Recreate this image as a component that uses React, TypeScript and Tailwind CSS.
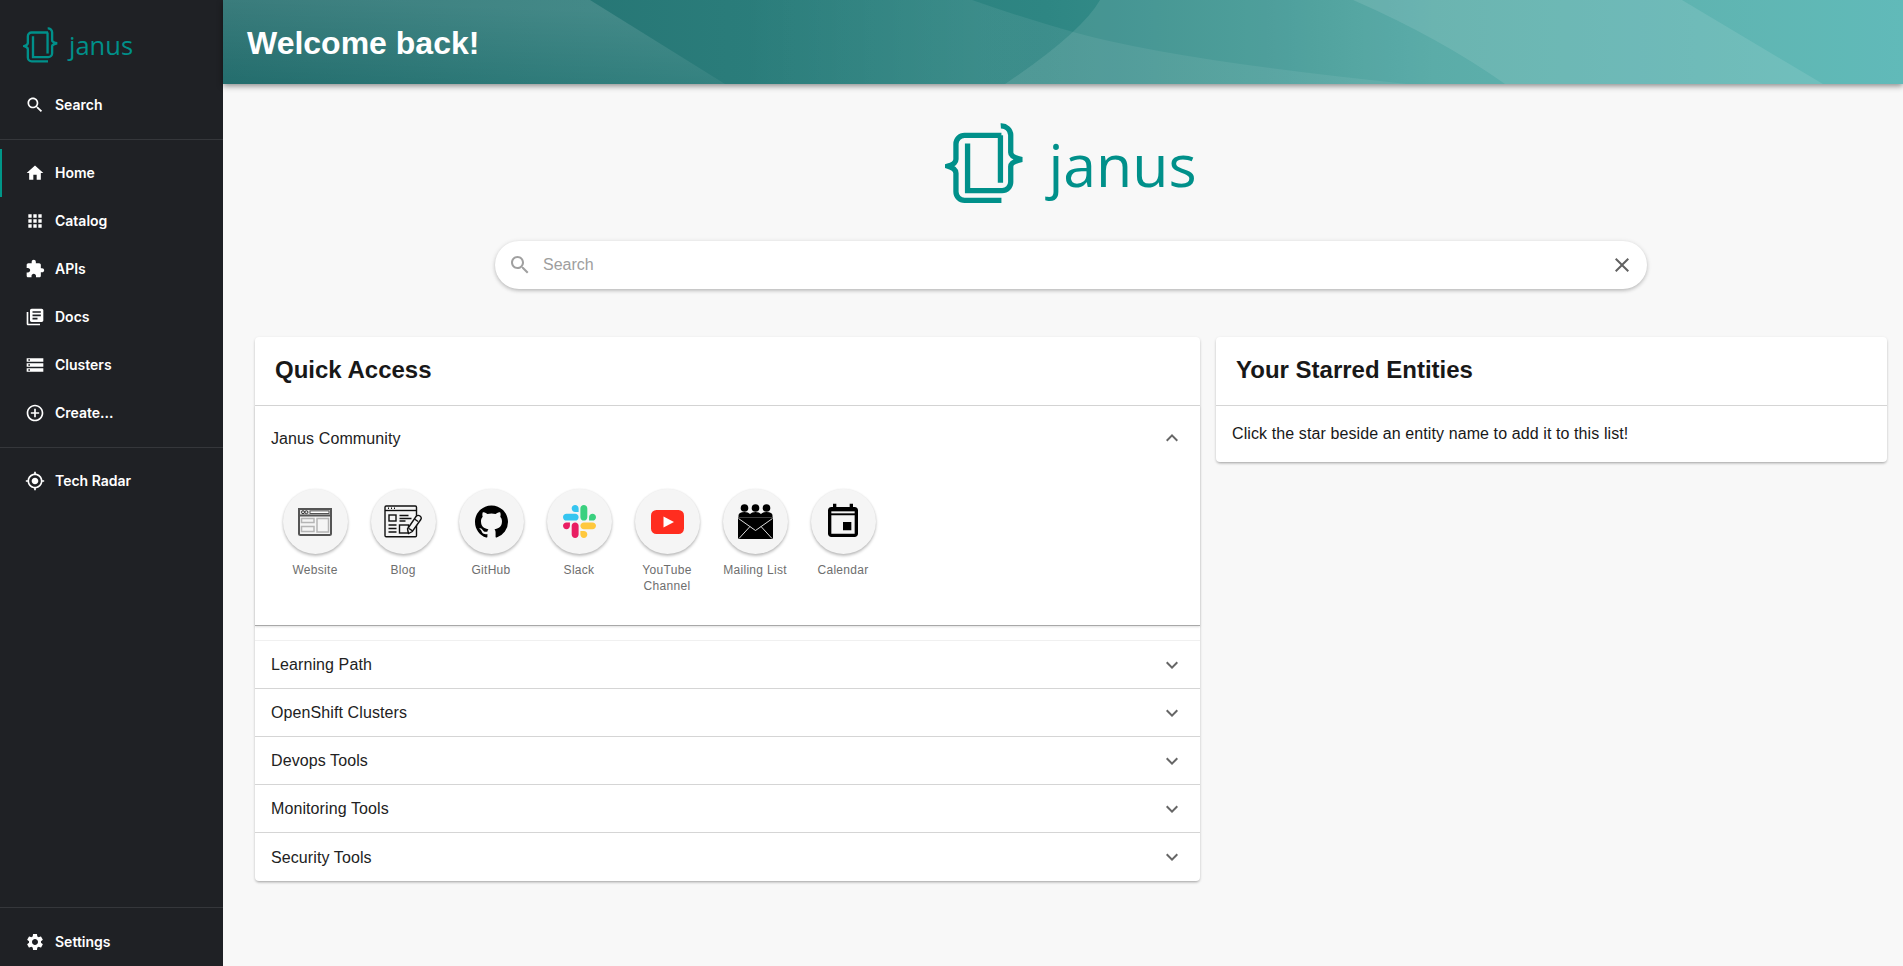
const ICONS = {
  search: 'M15.5 14h-.79l-.28-.27C15.41 12.59 16 11.11 16 9.5 16 5.91 13.09 3 9.5 3S3 5.91 3 9.5 5.91 16 9.5 16c1.61 0 3.09-.59 4.23-1.57l.27.28v.79l5 4.99L20.49 19l-4.99-5zm-6 0C7.01 14 5 11.99 5 9.5S7.01 5 9.5 5 14 7.01 14 9.5 11.99 14 9.5 14z',
  home: 'M10 20v-6h4v6h5v-8h3L12 3 2 12h3v8z',
  apps: 'M4 8h4V4H4v4zm6 12h4v-4h-4v4zm-6 0h4v-4H4v4zm0-6h4v-4H4v4zm6 0h4v-4h-4v4zm6-10v4h4V4h-4zm-6 4h4V4h-4v4zm6 6h4v-4h-4v4zm0 6h4v-4h-4v4z',
  extension: 'M20.5 11H19V7c0-1.1-.9-2-2-2h-4V3.5C13 2.12 11.88 1 10.5 1S8 2.12 8 3.5V5H4c-1.1 0-1.99.9-1.99 2v3.8H3.5c1.49 0 2.7 1.21 2.7 2.7s-1.21 2.7-2.7 2.7H2V20c0 1.1.9 2 2 2h3.8v-1.5c0-1.49 1.21-2.7 2.7-2.7 1.49 0 2.7 1.21 2.7 2.7V22H17c1.1 0 2-.9 2-2v-4h1.5c1.38 0 2.5-1.12 2.5-2.5S21.88 11 20.5 11z',
  docs: 'M4 6H2v14c0 1.1.9 2 2 2h14v-2H4V6zm16-4H8c-1.1 0-2 .9-2 2v12c0 1.1.9 2 2 2h12c1.1 0 2-.9 2-2V4c0-1.1-.9-2-2-2zm-1 9H9V9h10v2zm-4 4H9v-2h6v2zm4-8H9V5h10v2z',
  storage: 'M2 20h20v-4H2v4zm2-3h2v2H4v-2zM2 4v4h20V4H2zm4 3H4V5h2v2zm-4 7h20v-4H2v4zm2-3h2v2H4v-2z',
  add: 'M13 7h-2v4H7v2h4v4h2v-4h4v-2h-4V7zm-1-5C6.48 2 2 6.48 2 12s4.48 10 10 10 10-4.48 10-10S17.52 2 12 2zm0 18c-4.41 0-8-3.59-8-8s3.59-8 8-8 8 3.59 8 8-3.59 8-8 8z',
  radar: 'M12 8c-2.21 0-4 1.79-4 4s1.79 4 4 4 4-1.79 4-4-1.79-4-4-4zm8.94 3c-.46-4.17-3.77-7.48-7.94-7.94V1h-2v2.06C6.83 3.52 3.52 6.83 3.06 11H1v2h2.06c.46 4.17 3.77 7.48 7.94 7.94V23h2v-2.06c4.17-.46 7.48-3.77 7.94-7.94H23v-2h-2.06zM12 19c-3.87 0-7-3.13-7-7s3.13-7 7-7 7 3.13 7 7-3.13 7-7 7z',
  settings: 'M19.14 12.94c.04-.3.06-.61.06-.94 0-.32-.02-.64-.07-.94l2.03-1.58c.18-.14.23-.41.12-.61l-1.92-3.32c-.12-.22-.37-.29-.59-.22l-2.39.96c-.5-.38-1.03-.7-1.62-.94l-.36-2.54c-.04-.24-.24-.41-.48-.41h-3.84c-.24 0-.43.17-.47.41l-.36 2.54c-.59.24-1.13.57-1.62.94l-2.39-.96c-.22-.08-.47 0-.59.22L2.74 8.87c-.12.21-.08.47.12.61l2.03 1.58c-.05.3-.09.63-.09.94s.02.64.07.94l-2.03 1.58c-.18.14-.23.41-.12.61l1.92 3.32c.12.22.37.29.59.22l2.39-.96c.5.38 1.03.7 1.62.94l.36 2.54c.05.24.24.41.48.41h3.84c.24 0 .44-.17.47-.41l.36-2.54c.59-.24 1.13-.56 1.62-.94l2.39.96c.22.08.47 0 .59-.22l1.92-3.32c.12-.22.07-.47-.12-.61l-2.01-1.58zM12 15.6c-1.98 0-3.6-1.62-3.6-3.6s1.62-3.6 3.6-3.6 3.6 1.62 3.6 3.6-1.62 3.6-3.6 3.6z',
  more: 'M16.59 8.59L12 13.17 7.41 8.59 6 10l6 6 6-6z',
  less: 'M12 8l-6 6 1.41 1.41L12 10.83l4.59 4.58L18 14z',
  clear: 'M19 6.41L17.59 5 12 10.59 6.41 5 5 6.41 10.59 12 5 17.59 6.41 19 12 13.41 17.59 19 19 17.59 13.41 12z',
  github: 'M12 .3C5.37.3 0 5.67 0 12.3c0 5.3 3.44 9.8 8.2 11.39.6.11.82-.26.82-.58v-2.03c-3.34.73-4.04-1.61-4.04-1.61-.55-1.39-1.34-1.76-1.34-1.76-1.09-.74.08-.73.08-.73 1.2.09 1.84 1.24 1.84 1.24 1.07 1.83 2.81 1.3 3.5 1 .1-.78.42-1.31.76-1.61-2.67-.3-5.47-1.33-5.47-5.93 0-1.31.47-2.38 1.24-3.22-.14-.3-.54-1.52.1-3.18 0 0 1.01-.32 3.3 1.23a11.5 11.5 0 0 1 6 0c2.28-1.55 3.29-1.23 3.29-1.23.64 1.66.24 2.88.12 3.18a4.65 4.65 0 0 1 1.23 3.22c0 4.61-2.8 5.63-5.48 5.92.42.36.81 1.1.81 2.22v3.29c0 .32.22.7.82.58A12 12 0 0 0 24 12.3C24 5.67 18.63.3 12 .3z',
}

function Mui({ d, className }: { d: string; className: string }) {
  return (
    <svg viewBox="0 0 24 24" fill="currentColor" className={className}>
      <path d={d} />
    </svg>
  )
}

function LogoMark({ className }: { className: string }) {
  return (
    <svg viewBox="78 72 238 240" fill="none" stroke="currentColor" strokeWidth="16" className={className}>
      <path d="M248 107H137a26 26 0 0 0-26 26v46q0 14-24 21q24 7 24 21v56a26 26 0 0 0 26 26h111" />
      <path d="M146 132V274H250a26 26 0 0 0 26-26V201q0-14 34-21q-34-7-34-21V106a28 28 0 0 0-30-27" />
      <path d="M245 107V250" />
    </svg>
  )
}

function WebsiteIcon() {
  return (
    <svg viewBox="0 0 34 28" className="h-[28px] w-[34px]">
      <rect x="1" y="1" width="32" height="26" rx="1.5" fill="#f5f5f5" stroke="#555" strokeWidth="2" />
      <rect x="1" y="1" width="32" height="6.5" fill="#e0e0e0" stroke="#555" strokeWidth="2" />
      <circle cx="5" cy="4.2" r="1.5" fill="none" stroke="#333" />
      <circle cx="8.4" cy="4.2" r="1.5" fill="none" stroke="#333" />
      <rect x="12" y="2.9" width="19" height="2.6" fill="#fff" stroke="#444" strokeWidth="0.9" />
      <rect x="3.5" y="10.5" width="12.5" height="4" fill="#f5f5f5" stroke="#b5b5b5" strokeWidth="1.5" />
      <rect x="3.5" y="18.5" width="12.5" height="5" fill="#f5f5f5" stroke="#b5b5b5" strokeWidth="1.5" />
      <rect x="19" y="10.5" width="11.5" height="13.5" fill="#f5f5f5" stroke="#b5b5b5" strokeWidth="1.5" />
    </svg>
  )
}

function BlogIcon() {
  return (
    <svg viewBox="0 0 38 33" fill="none" stroke="#111" strokeWidth="1.4" className="h-[33px] w-[38px]">
      <rect x="1" y="1" width="31.5" height="30.8" rx="1.2" />
      <path d="M1 5.5H32.5" />
      <path d="M4 3.2h1M7 3.2h1M10 3.2h1" strokeWidth="1.4" />
      <rect x="5" y="10" width="7" height="6" />
      <path d="M15.5 10.5h9M15.5 13.5h12M15.5 16h6M4.5 20h8M4.5 23.5h8M4.5 27h8" />
      <rect x="15.5" y="20" width="9" height="8" />
      <path d="M24.5 28.5l-1-4.5 8.5-12.5q2-2 4-.5t.8 3.5l-8.5 12z" fill="#f5f5f5" />
      <path d="M25 23.5l3.5 2.3M30.5 14l3.5 2.5" />
    </svg>
  )
}

function SlackIcon() {
  return (
    <svg viewBox="0 0 122.8 122.8" className="size-[33px]">
      <path fill="#e91e63" d="M25.8 77.6c0 7.1-5.8 12.9-12.9 12.9S0 84.7 0 77.6s5.8-12.9 12.9-12.9h12.9v12.9zm6.5 0c0-7.1 5.8-12.9 12.9-12.9s12.9 5.8 12.9 12.9v32.3c0 7.1-5.8 12.9-12.9 12.9s-12.9-5.8-12.9-12.9V77.6z" />
      <path fill="#36c5f0" d="M45.2 25.8c-7.1 0-12.9-5.8-12.9-12.9S38.1 0 45.2 0s12.9 5.8 12.9 12.9v12.9H45.2zm0 6.5c7.1 0 12.9 5.8 12.9 12.9s-5.8 12.9-12.9 12.9H12.9C5.8 58.1 0 52.3 0 45.2s5.8-12.9 12.9-12.9h32.3z" />
      <path fill="#3ad07f" d="M97 45.2c0-7.1 5.8-12.9 12.9-12.9s12.9 5.8 12.9 12.9-5.8 12.9-12.9 12.9H97V45.2zm-6.5 0c0 7.1-5.8 12.9-12.9 12.9s-12.9-5.8-12.9-12.9V12.9C64.7 5.8 70.5 0 77.6 0s12.9 5.8 12.9 12.9v32.3z" />
      <path fill="#ffc83d" d="M77.6 97c7.1 0 12.9 5.8 12.9 12.9s-5.8 12.9-12.9 12.9-12.9-5.8-12.9-12.9V97h12.9zm0-6.5c-7.1 0-12.9-5.8-12.9-12.9s5.8-12.9 12.9-12.9h32.3c7.1 0 12.9 5.8 12.9 12.9s-5.8 12.9-12.9 12.9H77.6z" />
    </svg>
  )
}

function YoutubeIcon() {
  return (
    <svg viewBox="0 0 33 24" className="h-[24px] w-[33px]">
      <rect width="33" height="24" rx="5.5" fill="#ff2d1f" />
      <path d="M12.5 6.5l10.5 5.5-10.5 5.5z" fill="#fff" />
    </svg>
  )
}

function MailIcon() {
  return (
    <svg viewBox="0 0 35 35" className="size-[35px]">
      <circle cx="6.5" cy="4" r="3.8" />
      <circle cx="17.5" cy="4" r="3.8" />
      <circle cx="28.5" cy="4" r="3.8" />
      <path d="M0.5 13.5v-2q0-3.5 6-3.5q4 0 5.5 2q1.5-2 5.5-2t5.5 2q1.5-2 5.5-2q6 0 6 3.5v2z" />
      <path d="M0 13.5h35v20.5a1 1 0 0 1-1 1H1a1 1 0 0 1-1-1z" />
      <path d="M0.5 14.5L17.5 26.5L34.5 14.5M1 34.5L12 22.5M34 34.5L23 22.5" fill="none" stroke="#f5f5f5" strokeWidth="0.9" />
    </svg>
  )
}

function CalendarIcon() {
  return (
    <svg viewBox="0 0 24 24" className="size-10">
      <path d="M17 12h-5v5h5v-5zM16 1v2H8V1H6v2H5c-1.11 0-1.99.9-1.99 2L3 19c0 1.1.89 2 2 2h14c1.1 0 2-.9 2-2V5c0-1.1-.9-2-2-2h-1V1h-2zm3 18H5V8h14v11z" />
      <rect x="5" y="5.6" width="14" height="1.2" fill="#f5f5f5" />
    </svg>
  )
}

const NAV_MAIN = [
  { label: 'Home', icon: ICONS.home, active: true },
  { label: 'Catalog', icon: ICONS.apps },
  { label: 'APIs', icon: ICONS.extension },
  { label: 'Docs', icon: ICONS.docs },
  { label: 'Clusters', icon: ICONS.storage },
  { label: 'Create...', icon: ICONS.add },
]

function NavItem({ label, icon, active }: { label: string; icon: string; active?: boolean }) {
  return (
    <div className={`flex h-12 items-center gap-[10px] text-sm font-semibold text-white ${active ? 'border-l-2 border-[#009688] pl-[23px]' : 'pl-[25px]'}`}>
      <Mui d={icon} className="size-5" />
      {label}
    </div>
  )
}

const LINKS = [
  { label: 'Website', icon: <WebsiteIcon /> },
  { label: 'Blog', icon: <BlogIcon /> },
  { label: 'GitHub', icon: <Mui d={ICONS.github} className="size-[33px] text-black" /> },
  { label: 'Slack', icon: <SlackIcon /> },
  { label: 'YouTube Channel', icon: <YoutubeIcon /> },
  { label: 'Mailing List', icon: <MailIcon /> },
  { label: 'Calendar', icon: <CalendarIcon /> },
]

const SECTIONS = ['OpenShift Clusters', 'Devops Tools', 'Monitoring Tools', 'Security Tools']

function HeaderArt() {
  return (
    <svg viewBox="0 0 1680 84" preserveAspectRatio="none" className="absolute inset-0 size-full">
      <defs>
        <linearGradient id="headerBase">
          <stop offset="0" stopColor="#1f6a6a" />
          <stop offset="0.3" stopColor="#2a7c7a" />
          <stop offset="0.49" stopColor="#2e8683" />
          <stop offset="0.62" stopColor="#3a9490" />
          <stop offset="0.72" stopColor="#49a39f" />
          <stop offset="1" stopColor="#50b3b1" />
        </linearGradient>
        <linearGradient id="fadeLeft" x1="0" y1="1" x2="0.3" y2="0">
          <stop offset="0" stopColor="#fff" stopOpacity="0.02" />
          <stop offset="1" stopColor="#fff" stopOpacity="0.13" />
        </linearGradient>
        <linearGradient id="fadeLow" gradientUnits="userSpaceOnUse" x1="520" y1="0" x2="760" y2="0">
          <stop offset="0" stopColor="#fff" stopOpacity="0" />
          <stop offset="1" stopColor="#fff" stopOpacity="0.07" />
        </linearGradient>
      </defs>
      <rect width="1680" height="84" fill="url(#headerBase)" />
      <path d="M0 0H367L502 84H0z" fill="url(#fadeLeft)" />
      {/* arc right of the dark wedge */}
      <path d="M877 0Q858 33 782 84H1680V0z" fill="#fff" fillOpacity="0.1" />
      {/* low sweep under the wedge */}
      <path d="M749 0Q800 18 850 32Q950 60 1184 84H502L367 0z" fill="url(#fadeLow)" />
      {/* band on the right */}
      <path d="M1130 0Q1217 38 1282 84H1600L1459 0z" fill="#fff" fillOpacity="0.1" />
    </svg>
  )
}

export default function App() {
  return (
    <div className="flex h-[966px] overflow-hidden bg-[#f8f8f8] font-['Liberation_Sans',sans-serif] text-[#181818]">
      {/* Sidebar */}
      <aside className="flex w-[223px] shrink-0 flex-col bg-[#1f2125] font-['Inter',sans-serif]">
        <div className="flex h-[81px] items-start gap-[11px] pl-[23px] pt-[27px] text-[#00908a]">
          <LogoMark className="h-[36px] w-[35px]" />
          <span className="font-['Open_Sans',sans-serif] text-[25.5px] leading-[37px] font-normal">janus</span>
        </div>
        <NavItem label="Search" icon={ICONS.search} />
        <div className="mt-[10px] mb-[9px] h-px bg-[#35373b]" />
        {NAV_MAIN.map(n => <NavItem key={n.label} {...n} />)}
        <div className="mt-[10px] mb-[9px] h-px bg-[#35373b]" />
        <NavItem label="Tech Radar" icon={ICONS.radar} />
        <div className="mt-auto h-px bg-[#35373b]" />
        <div className="mt-[10px]">
          <NavItem label="Settings" icon={ICONS.settings} />
        </div>
      </aside>

      {/* Main */}
      <main className="min-w-0 flex-1">
        <header className="relative flex h-[84px] items-center overflow-hidden bg-[#1f6a6a] pl-[24px] pt-[1px] shadow-[0_2px_6px_rgba(0,0,0,0.45)]">
          <HeaderArt />
          <h1 className="relative text-[32px] font-bold text-white">Welcome back!</h1>
        </header>

        <div className="pl-8 pr-4">
          <div className="mt-[39px] flex h-[81px] items-center justify-center gap-[24px] text-[#00908a]">
            <LogoMark className="h-[81px] w-[79px]" />
            <span className="font-['Open_Sans',sans-serif] text-[59px] leading-[80px] font-normal">janus</span>
          </div>

          <div className="mx-auto mt-[37px] flex h-12 w-[1152px] items-center rounded-full bg-white pl-[13px] pr-[13px] shadow-[0_2px_4px_-1px_rgba(0,0,0,0.2),0_1px_5px_rgba(0,0,0,0.15)]">
            <Mui d={ICONS.search} className="size-6 text-[#a0a0a0]" />
            <span className="ml-[11px] flex-1 text-base text-[#9e9e9e]">Search</span>
            <Mui d={ICONS.clear} className="size-6 text-[#616161]" />
          </div>

          <div className="mt-[48px] grid grid-cols-[945px_671px] items-start gap-4">
            {/* Quick access */}
            <section className="rounded-[4px] bg-white shadow-[0_2px_3px_-1px_rgba(0,0,0,0.25),0_1px_3px_rgba(0,0,0,0.14)]">
              <h2 className="flex h-[69px] items-center border-b border-[#d5d5d5] pb-[3px] pl-5 text-2xl font-bold">Quick Access</h2>

              <div className="h-[220px] border-b border-[#a8a8a8] shadow-[0_1px_2px_rgba(0,0,0,0.12)]">
                <div className="flex h-[64px] items-center justify-between pl-4 pr-[16px]">
                  <span className="mt-px text-base tracking-[0.1px] text-[#222]">Janus Community</span>
                  <Mui d={ICONS.less} className="size-6 text-[#666]" />
                </div>
                <div className="flex pl-[16px] pt-[19px]">
                  {LINKS.map(l => (
                    <div key={l.label} className="flex w-[88px] flex-col items-center">
                      <div className="flex size-[65px] items-center justify-center rounded-full bg-[#f5f5f5] shadow-[0_2px_3px_rgba(0,0,0,0.25),0_0_2px_rgba(0,0,0,0.08)]">
                        {l.icon}
                      </div>
                      <span className="mt-2 w-[76px] text-center text-xs leading-4 tracking-[0.3px] text-[#6e6e6e]">{l.label}</span>
                    </div>
                  ))}
                </div>
              </div>

              <div className="mt-[14px] flex h-[49px] items-center justify-between border-t border-b border-t-[#f0f0f0] border-b-[#d5d5d5] pl-4 pr-[16px]">
                <span className="mt-px text-base tracking-[0.1px] text-[#222]">Learning Path</span>
                <Mui d={ICONS.more} className="size-6 text-[#666]" />
              </div>
              {SECTIONS.map((s, i) => (
                <div key={s} className={`flex h-[48px] items-center justify-between pl-4 pr-[16px] ${i < SECTIONS.length - 1 ? 'border-b border-[#d5d5d5]' : ''}`}>
                  <span className="mt-px text-base tracking-[0.1px] text-[#222]">{s}</span>
                  <Mui d={ICONS.more} className="size-6 text-[#666]" />
                </div>
              ))}
            </section>

            {/* Starred */}
            <section className="rounded-[4px] bg-white shadow-[0_2px_3px_-1px_rgba(0,0,0,0.25),0_1px_3px_rgba(0,0,0,0.14)]">
              <h2 className="flex h-[69px] items-center border-b border-[#d5d5d5] pb-[3px] pl-5 text-2xl font-bold">Your Starred Entities</h2>
              <p className="flex h-[56px] items-center pl-4 text-base tracking-[0.1px]">Click the star beside an entity name to add it to this list!</p>
            </section>
          </div>
        </div>
      </main>
    </div>
  )
}
